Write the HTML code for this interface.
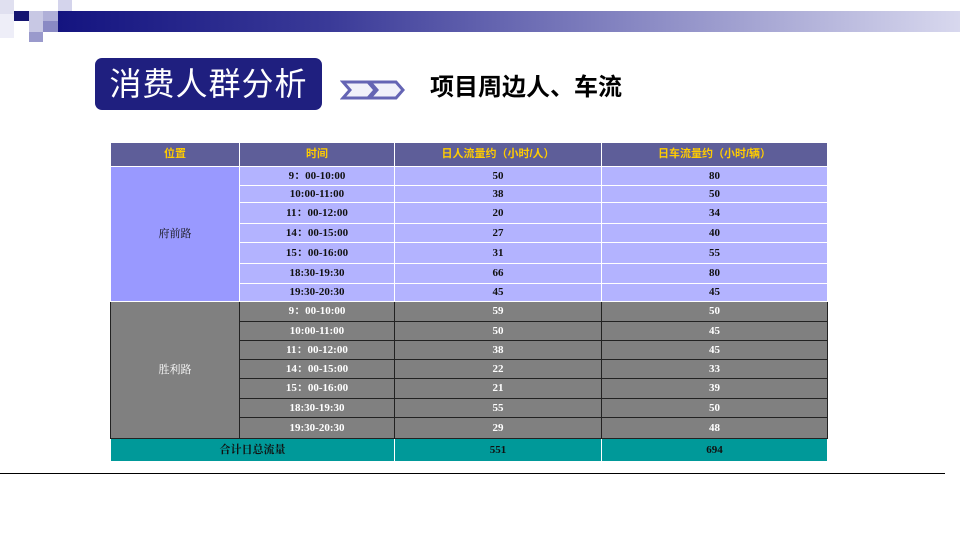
<!DOCTYPE html>
<html><head><meta charset="utf-8"><style>
body{margin:0;width:960px;height:540px;background:#fff;position:relative;overflow:hidden;font-family:"Liberation Sans","Noto Sans CJK SC",sans-serif}
.a{position:absolute}
table{position:absolute;left:110px;top:142px;border-collapse:collapse;table-layout:fixed;font-family:"Liberation Serif","Noto Serif CJK SC",serif;font-weight:bold;font-size:11px;text-align:center}
td{padding:0;line-height:1}
.h td{background:#5e5e99;color:#ffcc00;height:23px;border:1px solid #fff;font-family:"Liberation Sans","Noto Sans CJK SC",sans-serif;font-size:11px}
.u td{background:#b3b3ff;color:#111;border:1.5px solid #fff}
.u td.f{background:#9999ff;font-weight:normal}
.g td{background:#808080;color:#fff;border:1.5px solid #222}
.g td.f{font-weight:normal}
.t td{background:#009999;color:#111;height:22px;border:1px solid #fff}
</style></head><body>
<div class="a" style="left:58px;top:11px;width:902px;height:21px;background:linear-gradient(90deg,#141480 0%,#3a3a98 30%,#8a8ac4 65%,#d8d8ee 100%)"></div>
<div class="a" style="left:0;top:0;width:14px;height:14px;background:#e0e0f0"></div>
<div class="a" style="left:14px;top:11px;width:15px;height:10px;background:#141470"></div>
<div class="a" style="left:29px;top:11px;width:14px;height:21px;background:#c8c8e4"></div>
<div class="a" style="left:43px;top:11px;width:15px;height:10px;background:#b0b0d8"></div>
<div class="a" style="left:43px;top:21px;width:15px;height:11px;background:#8a8ac4"></div>
<div class="a" style="left:58px;top:0;width:14px;height:11px;background:#d4d4ec"></div>
<div class="a" style="left:29px;top:32px;width:14px;height:10px;background:#9a9acc"></div>
<div class="a" style="left:0;top:14px;width:14px;height:24px;background:#eeeef8"></div>
<div class="a" style="left:95px;top:58px;width:227px;height:52px;background:#1f1f7f;border-radius:7px;color:#fff;font-size:32px;font-weight:400;line-height:52px;text-align:center;letter-spacing:1px">消费人群分析</div>
<svg class="a" style="left:340px;top:80px" width="68" height="22"><path d="M3 2H28L35 10L28 18H3L10 10Z" fill="#f0f0fa" stroke="#6464b4" stroke-width="3"/><path d="M30 2H56L63 10L56 18H30L37 10Z" fill="#f0f0fa" stroke="#6464b4" stroke-width="3"/></svg>
<div class="a" style="left:430px;top:73px;font-size:24px;font-weight:bold;color:#000;line-height:30px">项目周边人、车流</div>
<table>
<colgroup><col style="width:129px"><col style="width:155px"><col style="width:207px"><col style="width:226px"></colgroup>
<tr class="h"><td>位置</td><td>时间</td><td>日人流量约（小时/人）</td><td>日车流量约（小时/辆）</td></tr>
<tr class="u" style="height:19px"><td class="f" rowspan="7">府前路</td><td>9：00-10:00</td><td>50</td><td>80</td></tr>
<tr class="u" style="height:17px"><td>10:00-11:00</td><td>38</td><td>50</td></tr>
<tr class="u" style="height:21px"><td>11：00-12:00</td><td>20</td><td>34</td></tr>
<tr class="u" style="height:19px"><td>14：00-15:00</td><td>27</td><td>40</td></tr>
<tr class="u" style="height:21px"><td>15：00-16:00</td><td>31</td><td>55</td></tr>
<tr class="u" style="height:20px"><td>18:30-19:30</td><td>66</td><td>80</td></tr>
<tr class="u" style="height:18px"><td style="border-left:1.5px solid #222">19:30-20:30</td><td>45</td><td>45</td></tr>
<tr class="g" style="height:20px"><td class="f" rowspan="7">胜利路</td><td>9：00-10:00</td><td>59</td><td>50</td></tr>
<tr class="g" style="height:19px"><td>10:00-11:00</td><td>50</td><td>45</td></tr>
<tr class="g" style="height:19px"><td>11：00-12:00</td><td>38</td><td>45</td></tr>
<tr class="g" style="height:19px"><td>14：00-15:00</td><td>22</td><td>33</td></tr>
<tr class="g" style="height:20px"><td>15：00-16:00</td><td>21</td><td>39</td></tr>
<tr class="g" style="height:19px"><td>18:30-19:30</td><td>55</td><td>50</td></tr>
<tr class="g" style="height:21px"><td>19:30-20:30</td><td>29</td><td>48</td></tr>
<tr class="t"><td colspan="2">合计日总流量</td><td>551</td><td>694</td></tr>
</table>
<div class="a" style="left:0;top:473px;width:945px;height:1px;background:#000"></div>
</body></html>
